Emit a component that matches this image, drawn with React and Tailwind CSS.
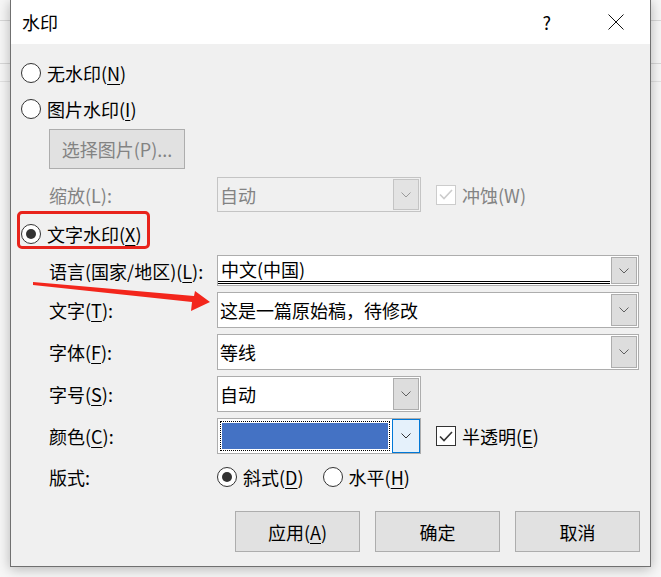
import React from "react";

const ui = "font-['Noto_Sans_CJK_SC','Microsoft_YaHei',sans-serif]";

function Key({ children }) {
  return <span className="underline underline-offset-[3px] decoration-1">{children}</span>;
}

function Radio({ checked }) {
  return (
    <span className="w-[20px] h-[20px] shrink-0 rounded-full border border-[#333333] bg-white flex items-center justify-center">
      {checked && <span className="w-[10px] h-[10px] rounded-full bg-[#333333]" />}
    </span>
  );
}

function Chevron({ color = "#606060" }) {
  return (
    <svg width="10" height="6" viewBox="0 0 10 6">
      <path d="M0.5 0.5 L5 5 L9.5 0.5" fill="none" stroke={color} strokeWidth="1" />
    </svg>
  );
}

function DropBtn({ disabled }) {
  return (
    <div
      className={`w-[26px] self-stretch m-[1px] border flex items-center justify-center ${
        disabled ? "border-[#c4c4c4] bg-[#e3e3e3]" : "border-[#adadad] bg-[#dddddd]"
      }`}
    >
      <Chevron color={disabled ? "#9a9a9a" : "#606060"} />
    </div>
  );
}

function Combo({ value, wide, h = "h-[36px]" }) {
  return (
    <div className={`${wide ? "w-[422px]" : "w-[204px]"} ${h} border border-[#adadad] bg-white flex`}>
      <div className="flex-1 flex items-center pl-[2px] text-black whitespace-nowrap">{value}</div>
      <DropBtn />
    </div>
  );
}

function Check({ checked, disabled }) {
  return (
    <span
      className={`w-[20px] h-[20px] shrink-0 border bg-white flex items-center justify-center ${
        disabled ? "border-[#cccccc]" : "border-[#333333]"
      }`}
    >
      {checked && (
        <svg width="14" height="11" viewBox="0 0 14 11">
          <path
            d="M1 5.5 L5 9.5 L13 1"
            fill="none"
            stroke={disabled ? "#cccccc" : "#333333"}
            strokeWidth="1.6"
          />
        </svg>
      )}
    </span>
  );
}

function Row({ label, children, className = "mt-[6px] h-[36px]" }) {
  return (
    <div className={`flex items-center ${className}`}>
      <div className="w-[168px] ml-[28px] text-black whitespace-nowrap">{label}</div>
      {children}
    </div>
  );
}

function Button({ children }) {
  return (
    <div className="w-[125px] h-[41px] border border-[#adadad] bg-[#e1e1e1] flex items-center justify-center text-black">
      {children}
    </div>
  );
}

export default function App() {
  return (
    <div className={`w-[661px] h-[577px] bg-[#f7f7f7] overflow-hidden relative ${ui}`}>
      {/* document lines peeking behind the dialog */}
      <div className="absolute left-0 top-[20px] w-full h-px bg-[#d8d8d8]" />
      <div className="absolute left-0 top-[63px] w-full h-px bg-[#d8d8d8]" />
      <div className="absolute left-0 top-[81px] w-full h-px bg-[#e2e2e2]" />

      <div className="relative ml-[10px] w-[641px] h-[567px] border-x border-b border-[#707070] bg-[#f0f0f0] shadow-[0_2px_12px_rgba(0,0,0,0.28)] flex flex-col">
        {/* title bar */}
        <div className="h-[44px] bg-white flex items-center pl-[11px] shrink-0">
          <span className="text-[18px] text-black leading-none">水印</span>
          <span className="ml-auto mr-[57px] text-[18px] text-black leading-none">?</span>
          <svg width="16" height="16" viewBox="0 0 16 16" className="mr-[26px]">
            <path d="M0.5 0.5 L15.5 15.5 M15.5 0.5 L0.5 15.5" stroke="#111" strokeWidth="1" />
          </svg>
        </div>

        <div className="flex flex-col pl-[10px] pt-[11px] text-[18px] text-black leading-none">
          <div className="flex items-center h-[36px] gap-[6px]">
            <Radio />
            <span>无水印(<Key>N</Key>)</span>
          </div>
          <div className="flex items-center h-[36px] gap-[6px]">
            <Radio />
            <span>图片水印(<Key>I</Key>)</span>
          </div>
          <div className="mt-[2px] ml-[28px] w-[136px] h-[40px] border border-[#adadad] bg-[#e1e1e1] flex items-center justify-center text-[#838383] whitespace-nowrap">
            选择图片(P)...
          </div>

          <div className="flex items-center mt-[8px] h-[35px]">
            <div className="w-[168px] ml-[28px] text-[#838383]">缩放(L):</div>
            <div className="w-[204px] h-[35px] border border-[#c4c4c4] bg-[#f0f0f0] flex">
              <div className="flex-1 flex items-center pl-[2px] text-[#838383]">自动</div>
              <DropBtn disabled />
            </div>
            <div className="ml-[15px] flex items-center gap-[6px] text-[#838383]">
              <Check checked disabled />
              <span>冲蚀(W)</span>
            </div>
          </div>

          <div className="relative flex items-center mt-[4px] h-[36px] gap-[6px]">
            <div className="absolute left-[-4px] top-[-5px] w-[133px] h-[38px] border-[3px] border-[#e8231b] rounded-[5px]" />
            <Radio checked />
            <span>文字水印(<Key>X</Key>)</span>
          </div>

          <Row
            className="mt-[3px] h-[31px]"
            label={
              <>
                语言(国家/地区)(<Key>L</Key>):
              </>
            }
          >
            <div className="w-[422px] h-[31px] border border-[#adadad] bg-white flex">
              <div className="flex-1 flex items-center pl-[3px] mb-[1px] border-b-[3px] border-double border-black">
                中文(中国)
              </div>
              <DropBtn />
            </div>
          </Row>

          <Row label={<>文字(<Key>T</Key>):</>}>
            <Combo wide value="这是一篇原始稿，待修改" />
          </Row>
          <Row label={<>字体(<Key>F</Key>):</>}>
            <Combo wide value="等线" />
          </Row>
          <Row label={<>字号(<Key>S</Key>):</>}>
            <Combo value="自动" />
          </Row>
          <Row label={<>颜色(<Key>C</Key>):</>}>
            <div className="w-[204px] h-[36px] border border-[#adadad] bg-white flex">
              <div className="flex-1 m-[2px] border border-dotted border-black p-px">
                <div className="w-full h-full bg-[#4472c4]" />
              </div>
              <div className="w-[28px] self-stretch border border-[#0078d7] bg-[#e5f1fb] flex items-center justify-center">
                <Chevron color="#333333" />
              </div>
            </div>
            <div className="ml-[15px] flex items-center gap-[6px]">
              <Check checked />
              <span>半透明(<Key>E</Key>)</span>
            </div>
          </Row>
          <Row className="mt-[6px] h-[34px]" label="版式:">
            <div className="flex items-center gap-[6px]">
              <Radio checked />
              <span>斜式(<Key>D</Key>)</span>
            </div>
            <div className="ml-[19px] flex items-center gap-[6px]">
              <Radio />
              <span>水平(<Key>H</Key>)</span>
            </div>
          </Row>

          <div className="mt-[17px] flex justify-end gap-[15px] pr-[10px]">
            <Button>应用(<Key>A</Key>)</Button>
            <Button>确定</Button>
            <Button>取消</Button>
          </div>
        </div>

        {/* red annotation arrow */}
        <svg className="absolute left-[-10px] top-0 pointer-events-none" width="661" height="577">
          <polygon
            points="32,282 193,296 194,291 209,302 190,311 191,302 32,285"
            fill="#f3261c"
          />
        </svg>
      </div>
    </div>
  );
}
